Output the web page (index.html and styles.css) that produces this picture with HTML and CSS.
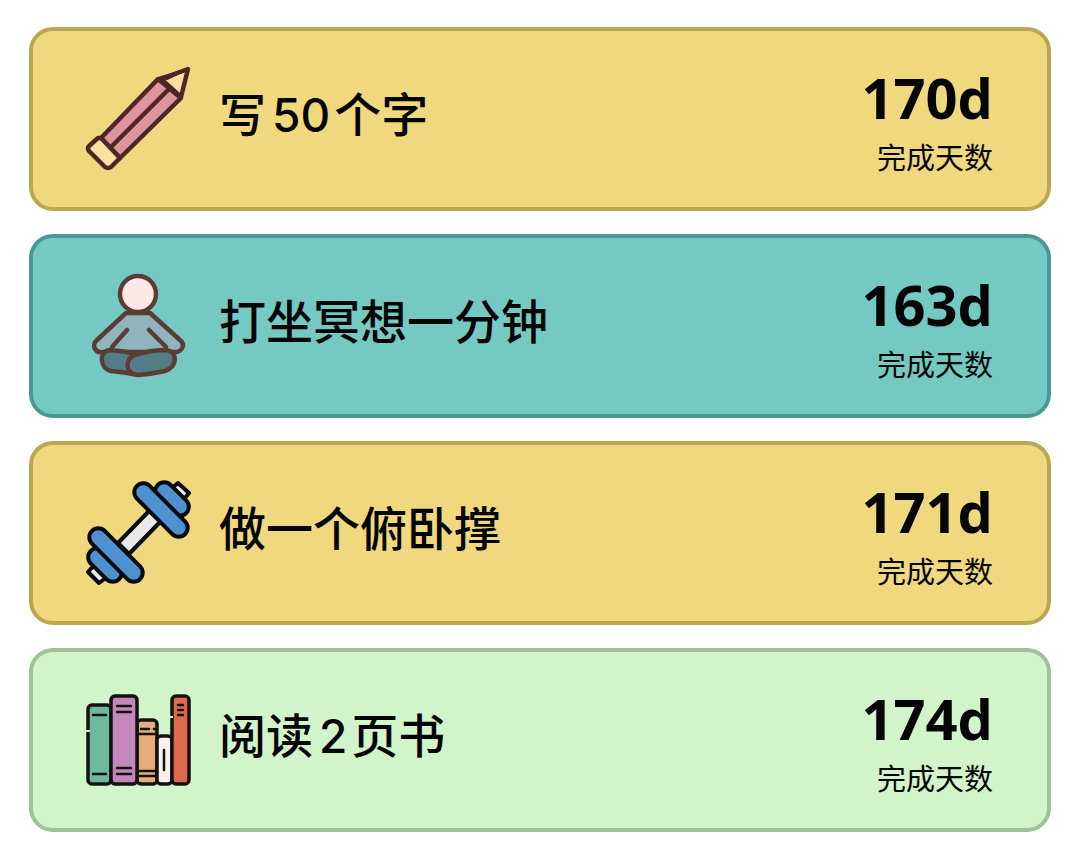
FILE: index.html
```html
<!DOCTYPE html>
<html lang="zh-CN">
<head>
<meta charset="utf-8">
<meta name="viewport" content="width=device-width, initial-scale=1">
<title>习惯</title>
<link rel="stylesheet" href="styles.css">
</head>
<body>
<main class="habits">
  <article class="card card-gold">
    <svg class="icon" viewBox="0 0 130 125" aria-hidden="true">
      <g stroke="#4f2528" stroke-width="4.500" stroke-linejoin="round" stroke-linecap="round">
        <path fill="#dd949b" d="M26 82 83 23 106 42 45 102Z"/>
        <path fill="#fbdf9c" d="M86 23 113 13 106 41Z"/>
        <path fill="#4f2528" stroke-width="2" d="M83 22 113 13 92 23Z"/>
        <path fill="#fbdf9c" d="M26 82 23 82 14 90Q12 92 14 95L30 111Q33 113 36 111L45 102Z"/>
        <path fill="none" d="M36 91 94 33"/>
      </g>
    </svg>
    <h2 class="title">写<span class="num">50</span>个字</h2>
    <div class="stat"><strong class="days">170d</strong><span class="label">完成天数</span></div>
  </article>

  <article class="card card-teal">
    <svg class="icon" viewBox="0 0 130 125" aria-hidden="true">
      <g stroke="#5b3c35" stroke-width="4.500" stroke-linejoin="round" stroke-linecap="round">
        <path fill="#8eb4bc" d="M51 50 22 77C16 82 20 91 29 89L98 89C107 90 111 82 105 77L75 50Z"/>
        <path fill="#547e86" d="M35 87C24 88 24 105 36 108Q49 109 63 112 77 111 90 108C103 104 103 88 91 87Q77 87 63 91 49 88 35 87Z"/>
        <path fill="none" d="M63 91C51 93 50 106 57 110M37 84 52 67M91 84 74 67"/>
        <circle cx="63" cy="31" r="18" fill="#fde7e7"/>
      </g>
    </svg>
    <h2 class="title">打坐冥想一分钟</h2>
    <div class="stat"><strong class="days">163d</strong><span class="label">完成天数</span></div>
  </article>

  <article class="card card-gold">
    <svg class="icon" viewBox="0 0 130 125" aria-hidden="true">
      <g stroke="#090b10" stroke-width="4" stroke-linejoin="round">
        <path fill="#e9e8e9" d="M75 40 86 51 54 84 43 73Z"/>
        <path fill="#ecebf2" d="M103 13 114 23 105 34 92 22ZM22 92 35 105 24 113 13 102Z"/>
        <rect x="-20" y="-9" width="40" height="18" rx="9" fill="#4f91ce" transform="translate(97 29) rotate(45)"/>
        <rect x="-34" y="-9" width="68" height="18" rx="9" fill="#4f91ce" transform="translate(86 40) rotate(45)"/>
        <rect x="-20" y="-9" width="40" height="18" rx="9" fill="#4f91ce" transform="translate(30 95) rotate(45)"/>
        <rect x="-34" y="-9" width="68" height="18" rx="9" fill="#4f91ce" transform="translate(41 85) rotate(45)"/>
      </g>
    </svg>
    <h2 class="title">做一个俯卧撑</h2>
    <div class="stat"><strong class="days">171d</strong><span class="label">完成天数</span></div>
  </article>

  <article class="card card-mint">
    <svg class="icon" viewBox="0 0 130 125" aria-hidden="true">
      <g stroke="#12130f" stroke-width="3.500" stroke-linecap="round">
        <rect x="13" y="28" width="23" height="79" rx="4" fill="#6db99e"/>
        <rect x="62" y="43" width="20" height="64" rx="4" fill="#e5ad7a"/>
        <rect x="82" y="59" width="15" height="48" rx="4" fill="#faf0ef"/>
        <rect x="97" y="19" width="17" height="88" rx="4" fill="#df694a"/>
        <rect x="36" y="19" width="26" height="88" rx="4" fill="#c487bb"/>
        <path stroke-width="2.500" d="M18 38H31M18 97H31M42 29H56M42 35H56M42 91H56M42 97H56M66 52H74M79 52H80M64 57H81M64 94H81M64 99H81M89 73V93M103 28H108M103 33H108M103 38H108"/>
      </g>
      <path stroke="#d1f4ca" stroke-width="2" d="M10 54H15M94 40H98"/>
    </svg>
    <h2 class="title">阅读<span class="num">2</span>页书</h2>
    <div class="stat"><strong class="days">174d</strong><span class="label">完成天数</span></div>
  </article>
</main>
</body>
</html>
```
FILE: styles.css
```css
* {
  box-sizing: border-box;
}

body {
  margin: 0;
  background: #fff;
  color: #050505;
  font-family: Inter, "Noto Sans CJK SC", sans-serif;
}

.habits {
  display: flex;
  flex-direction: column;
  gap: 23px;
  padding: 27px 29px 15px;
}

.card {
  display: flex;
  align-items: center;
  min-height: 184px;
  padding: 15px 54px 17px 42px;
  border: 4px solid;
  border-radius: 24px;
}

.card-gold {
  background: #efd87e;
  border-color: #bba653;
}

.card-teal {
  background: #74cac3;
  border-color: #4b9893;
}

.card-mint {
  background: #d1f4ca;
  border-color: #9fc398;
}

.icon {
  flex: none;
  width: 130px;
  height: 125px;
}

.title {
  flex: 1;
  margin: 0 0 6px 14px;
  font-size: 47px;
  font-weight: 500;
  line-height: 64px;
}

.num {
  margin: 0 4px 0 6px;
  font-size: 46px;
}

.stat {
  display: flex;
  flex-direction: column;
  align-items: flex-end;
  gap: 4px;
  margin-top: 10px;
}

.days {
  font-family: "Open Sans", sans-serif;
  font-size: 56px;
  font-weight: 700;
  line-height: 68px;
}

.label {
  font-size: 29px;
  font-weight: 400;
  line-height: 48px;
}
```
